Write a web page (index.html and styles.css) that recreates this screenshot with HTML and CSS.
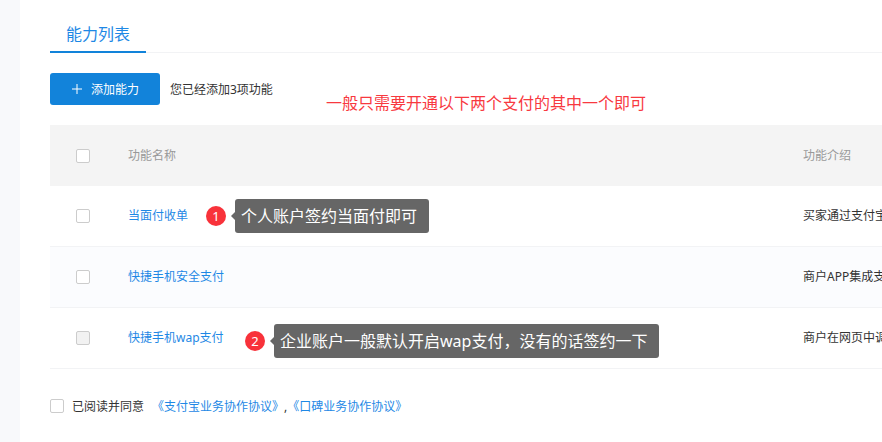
FILE: index.html
```html
<!DOCTYPE html>
<html lang="zh-CN">
<head>
  <meta charset="UTF-8">
  <title>能力列表</title>
  <link rel="stylesheet" href="styles.css">
</head>
<body>
  <div class="page">
    <div class="tabs">
      <span class="tab">能力列表</span>
    </div>

    <div class="toolbar">
      <button class="add-btn">
        <svg class="plus" width="10" height="10" viewBox="0 0 10 10"><path d="M5 0v10M0 5h10" stroke="#fff" stroke-width="1" fill="none"/></svg>
        添加能力
      </button>
      <span class="added">您已经添加3项功能</span>
      <span class="note">一般只需要开通以下两个支付的其中一个即可</span>
    </div>

    <div class="table">
      <div class="row head">
        <div class="cell-check"><span class="check"></span></div>
        <div class="cell-name">功能名称</div>
        <div class="cell-desc">功能介绍</div>
      </div>
      <div class="row">
        <div class="cell-check"><span class="check"></span></div>
        <div class="cell-name"><a href="#">当面付收单</a></div>
        <div class="cell-desc">买家通过支付宝</div>
        <div class="tip tip-one">
          <span class="badge">1</span>
          <span class="bubble">个人账户签约当面付即可</span>
        </div>
      </div>
      <div class="row alt">
        <div class="cell-check"><span class="check"></span></div>
        <div class="cell-name"><a href="#">快捷手机安全支付</a></div>
        <div class="cell-desc">商户APP集成支</div>
      </div>
      <div class="row">
        <div class="cell-check"><span class="check disabled"></span></div>
        <div class="cell-name"><a href="#">快捷手机wap支付</a></div>
        <div class="cell-desc">商户在网页中调</div>
        <div class="tip tip-two">
          <span class="badge">2</span>
          <span class="bubble">企业账户一般默认开启wap支付，没有的话签约一下</span>
        </div>
      </div>
    </div>

    <div class="agree">
      <span class="check"></span>
      <span class="agree-text">已阅读并同意</span>
      <a href="#">《支付宝业务协作协议》</a><span class="comma">,</span><a href="#">《口碑业务协作协议》</a>
    </div>
  </div>
</body>
</html>
```

FILE: styles.css
```css
html, body {
  margin: 0;
  padding: 0;
  height: 100%;
  overflow: hidden;
}
body {
  background-color: #f8f9fb;
  font-family: "Noto Sans", "Noto Sans CJK SC", sans-serif;
  font-size: 12px;
  color: #333;
}
a {
  color: #1e88e5;
  text-decoration: none;
}
.page {
  margin-left: 20px;
  padding: 0 0 0 30px;
  height: 442px;
  background-color: #fff;
  box-sizing: border-box;
}
.tabs {
  height: 53px;
  box-sizing: border-box;
  border-bottom: 1px solid #f2f3f5;
}
.tab {
  display: inline-block;
  box-sizing: border-box;
  width: 96px;
  height: 53px;
  padding: 22px 0 0 16px;
  border-bottom: 2px solid #1283da;
  font-size: 16px;
  line-height: 24px;
  color: #1e88e5;
}
.toolbar {
  position: relative;
  display: flex;
  align-items: center;
  margin-top: 20px;
  height: 32px;
}
.add-btn {
  display: flex;
  align-items: center;
  width: 110px;
  height: 32px;
  padding: 0 0 0 22px;
  border: none;
  border-radius: 3px;
  background-color: #1283da;
  color: #fff;
  font-family: inherit;
  font-size: 12px;
}
.plus {
  margin-right: 9px;
}
.added {
  margin-left: 10px;
  margin-top: -1px;
}
.note {
  position: absolute;
  left: 276px;
  top: 19px;
  font-size: 16px;
  line-height: 22px;
  color: #f8393f;
  white-space: nowrap;
}
.table {
  margin-top: 20px;
}
.row {
  position: relative;
  display: flex;
  align-items: center;
  height: 61px;
  box-sizing: border-box;
  border-bottom: 1px solid #f2f3f5;
  white-space: nowrap;
}
.row.head {
  background-color: #f4f4f4;
  border-bottom: none;
  color: #999;
}
.row.alt {
  background-color: #fbfcfe;
}
.cell-check {
  display: flex;
  flex: none;
  width: 78px;
  padding-left: 26px;
  box-sizing: border-box;
}
.cell-name {
  flex: none;
  width: 675px;
  margin-top: -2px;
}
.cell-desc {
  flex: none;
  margin-top: -2px;
}
.check {
  display: inline-block;
  box-sizing: border-box;
  width: 14px;
  height: 14px;
  border: 1px solid #ccc;
  border-radius: 2px;
  background-color: #fff;
}
.check.disabled {
  background-color: #f2f2f2;
}
.tip {
  position: absolute;
  display: flex;
  align-items: center;
}
.tip-one {
  left: 156px;
  top: 13px;
}
.tip-two {
  left: 195px;
  top: 16px;
}
.badge {
  width: 20px;
  height: 20px;
  margin-right: 9px;
  border-radius: 50%;
  background-color: #f8323a;
  color: #fff;
  font-size: 13px;
  line-height: 20px;
  text-align: center;
}
.bubble {
  position: relative;
  height: 34px;
  padding: 0 12px 0 6px;
  border-radius: 3px;
  background-color: #666;
  color: #fff;
  font-size: 16px;
  line-height: 34px;
}
.bubble::before {
  content: "";
  position: absolute;
  left: -4px;
  top: 13px;
  border-top: 4px solid transparent;
  border-bottom: 4px solid transparent;
  border-right: 4px solid #666;
}
.agree {
  display: flex;
  align-items: center;
  margin-top: 28px;
  white-space: nowrap;
}
.agree-text {
  margin-left: 8px;
  margin-right: 8px;
}
```
